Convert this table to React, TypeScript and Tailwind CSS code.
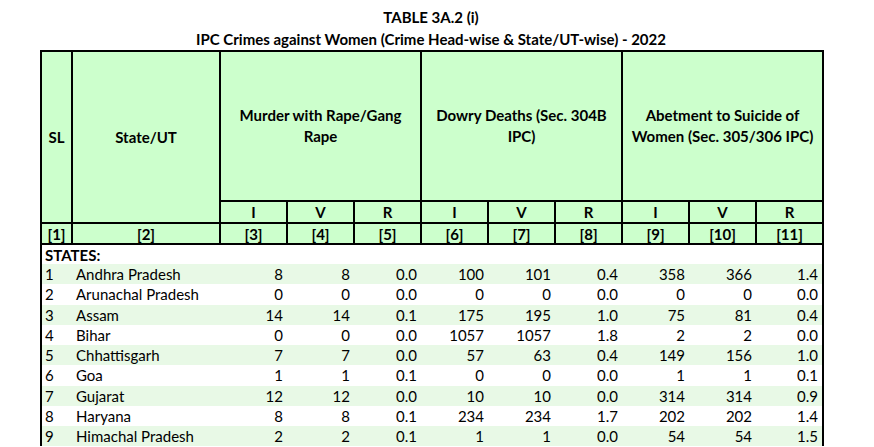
const rows = [
  ['1', 'Andhra Pradesh', '8', '8', '0.0', '100', '101', '0.4', '358', '366', '1.4'],
  ['2', 'Arunachal Pradesh', '0', '0', '0.0', '0', '0', '0.0', '0', '0', '0.0'],
  ['3', 'Assam', '14', '14', '0.1', '175', '195', '1.0', '75', '81', '0.4'],
  ['4', 'Bihar', '0', '0', '0.0', '1057', '1057', '1.8', '2', '2', '0.0'],
  ['5', 'Chhattisgarh', '7', '7', '0.0', '57', '63', '0.4', '149', '156', '1.0'],
  ['6', 'Goa', '1', '1', '0.1', '0', '0', '0.0', '1', '1', '0.1'],
  ['7', 'Gujarat', '12', '12', '0.0', '10', '10', '0.0', '314', '314', '0.9'],
  ['8', 'Haryana', '8', '8', '0.1', '234', '234', '1.7', '202', '202', '1.4'],
  ['9', 'Himachal Pradesh', '2', '2', '0.1', '1', '1', '0.0', '54', '54', '1.5'],
];

const groups = [
  ['Murder with Rape/Gang', 'Rape'],
  ['Dowry Deaths (Sec. 304B', 'IPC)'],
  ['Abetment to Suicide of', 'Women (Sec. 305/306 IPC)'],
];

const th = 'border-2 border-black bg-[#ccffcc] font-bold text-center p-0';

export default function App() {
  return (
    <div className="w-[874px] h-[447px] overflow-hidden bg-white text-black font-['Lato','Liberation_Sans',sans-serif] text-[15px]">
      <div className="ml-[40px] w-[782px] pt-[6px] text-center font-bold leading-[22px]">
        <div>TABLE 3A.2 (i)</div>
        <div>IPC Crimes against Women (Crime Head-wise &amp; State/UT-wise) - 2022</div>
      </div>
      <table className="ml-[40px] w-[782px] table-fixed border-collapse leading-[18px]">
        <colgroup>
          <col className="w-[31px]" />
          <col className="w-[148px]" />
          {Array.from({ length: 9 }).map((_, i) => (
            <col key={i} className="w-[67px]" />
          ))}
        </colgroup>
        <thead>
          <tr className="h-[150px]">
            <th rowSpan={2} className={th}>SL</th>
            <th rowSpan={2} className={th}>State/UT</th>
            {groups.map((g) => (
              <th key={g[0]} colSpan={3} className={th + ' leading-[21px]'}>
                {g[0]}
                <br />
                {g[1]}
              </th>
            ))}
          </tr>
          <tr className="h-[22px]">
            {groups.map((g) =>
              ['I', 'V', 'R'].map((s) => (
                <th key={g[0] + s} className={th}>{s}</th>
              ))
            )}
          </tr>
          <tr className="h-[21px]">
            {Array.from({ length: 11 }).map((_, i) => (
              <th key={i} className={th}>[{i + 1}]</th>
            ))}
          </tr>
        </thead>
        <tbody>
          <tr className="h-[20px]">
            <td colSpan={11} className="border-l-2 border-r-2 border-black pl-[3px] font-bold">STATES:</td>
          </tr>
          {rows.map((r, ri) => (
            <tr key={r[0]} className={'h-[20.25px] ' + (ri % 2 === 0 ? 'bg-[#e8f9e6]' : 'bg-white')}>
              <td className="border-l-2 border-black pl-[3px]">{r[0]}</td>
              <td className="pl-[4px] whitespace-nowrap">{r[1]}</td>
              {r.slice(2).map((v, ci) => (
                <td key={ci} className={'text-right pr-[4px]' + (ci === 8 ? ' border-r-2 border-black' : '')}>
                  {v}
                </td>
              ))}
            </tr>
          ))}
        </tbody>
      </table>
    </div>
  );
}
